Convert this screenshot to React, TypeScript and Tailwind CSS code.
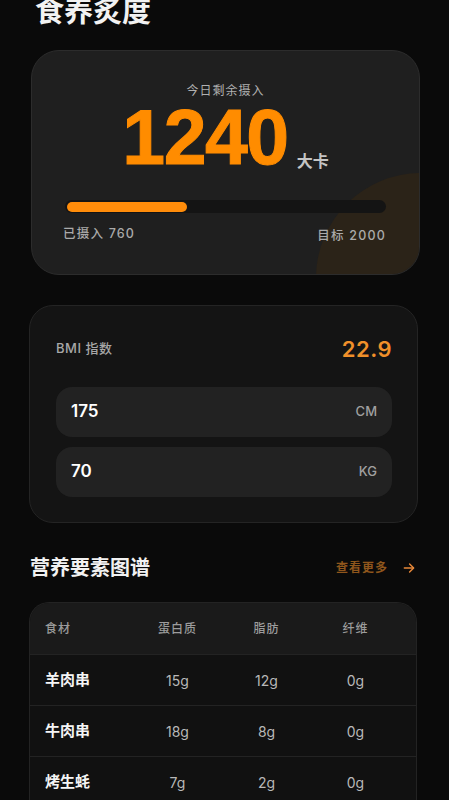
import React from "react";

const rows = [
  { name: "羊肉串", p: "15g", f: "12g", x: "0g" },
  { name: "牛肉串", p: "18g", f: "8g", x: "0g" },
  { name: "烤生蚝", p: "7g", f: "2g", x: "0g" },
];

const cjk = { fontFamily: '"Inter", "Noto Sans CJK SC", sans-serif' };

export default function App() {
  return (
    <div className="w-[449px] h-[800px] overflow-hidden bg-[#0a0a0a] text-white" style={cjk}>
      <div className="pl-[31px] pr-[29px]">
        <h1 className="mt-[-3px] pl-[4px] text-[29px] leading-[29px] font-bold text-[#f2f2f2]">食养炙度</h1>

        {/* Calorie card */}
        <div className="relative mt-[24px] h-[225px] overflow-hidden rounded-[28px] border border-[#2c2c2c] bg-[#1f1f1f]">
          <div className="absolute left-[284px] top-[122px] h-[210px] w-[210px] rounded-full bg-[#2b2318]" />
          <div className="relative flex flex-col px-[33px] pt-[32px]">
            <div className="text-center text-[12px] leading-[15px] tracking-[1px] text-[#b0b0b0]">今日剩余摄入</div>
            <div className="mt-[4px] flex items-end justify-center gap-[9px]">
              <span
                className="text-[77px] leading-[70px] font-bold tracking-[-1.5px] text-[#ff8c00] [-webkit-text-stroke:1px_#ff8c00]"
                style={{ fontFamily: '"Liberation Sans", Arial, sans-serif' }}
              >
                1240
              </span>
              <span className="mb-[1px] text-[16px] leading-[20px] font-bold text-[#c4c4c4]">大卡</span>
            </div>
            <div className="mt-[28px] h-[13px] w-full rounded-full bg-[#141414] p-[1.5px]">
              <div className="h-[10px] w-[38%] rounded-full bg-[#ff8c0a]" />
            </div>
            <div className="mt-[11px] flex items-center justify-between text-[12.5px] leading-[16px] tracking-[1.2px] text-[#aaaaaa] font-medium">
              <span className="-ml-[2px]">已摄入 760</span>
              <span className="mt-[4px]">目标 2000</span>
            </div>
          </div>
        </div>

        {/* BMI card */}
        <div className="mt-[30px] -ml-[2px] mr-[2px] rounded-[24px] border border-[#242424] bg-[#141414] pl-[26px] pr-[25px] pt-[29px] pb-[25px]">
          <div className="flex h-[28px] items-center justify-between">
            <span className="text-[13px] tracking-[0.5px] text-[#a8a8a8] font-medium">BMI 指数</span>
            <span className="text-[22px] font-semibold tracking-[0.5px] text-[#f0902a]">22.9</span>
          </div>
          <div className="mt-[24px] flex h-[50px] items-center justify-between rounded-[16px] bg-[#222222] px-[15px]">
            <span className="text-[17px] font-semibold text-white">175</span>
            <span className="text-[13px] font-medium text-[#a0a0a0]">CM</span>
          </div>
          <div className="mt-[10px] flex h-[50px] items-center justify-between rounded-[16px] bg-[#222222] px-[15px]">
            <span className="text-[17px] font-semibold text-white">70</span>
            <span className="text-[13px] font-medium text-[#a0a0a0]">KG</span>
          </div>
        </div>

        {/* Section header */}
        <div className="mt-[33px] -ml-[1px] flex h-[24px] items-center justify-between pr-[4px]">
          <span className="text-[20px] font-bold text-[#f2f2f2]">营养要素图谱</span>
          <div className="flex items-center gap-[14px]">
            <span className="text-[12px] font-bold tracking-[1px] text-[#8f561c]">查看更多</span>
            <svg width="14" height="14" viewBox="0 0 24 24" fill="none" stroke="#e8893a" strokeWidth="2.4" strokeLinecap="round" strokeLinejoin="round">
              <path d="M4 12h15" />
              <path d="M13 5l7 7-7 7" />
            </svg>
          </div>
        </div>

        {/* Table */}
        <div className="mt-[22px] -ml-[2px] mr-[3px] overflow-hidden rounded-t-[20px] border border-b-0 border-[#232323] bg-[#111111]">
          <div className="grid h-[51px] grid-cols-[88px_89px_89px_89px] items-center bg-[#1a1a1a] px-[15px] text-[12px] font-medium tracking-[1px] text-[#9c9c9c]">
            <span>食材</span>
            <span className="text-center">蛋白质</span>
            <span className="text-center">脂肪</span>
            <span className="text-center">纤维</span>
          </div>
          {rows.map((r) => (
            <div
              key={r.name}
              className="grid h-[51px] grid-cols-[88px_89px_89px_89px] items-center border-t border-[#232323] px-[15px]"
            >
              <span className="text-[15px] font-bold text-[#f5f5f5]">{r.name}</span>
              <span className="text-center text-[14px] text-[#b8b8b8]">{r.p}</span>
              <span className="text-center text-[14px] text-[#b8b8b8]">{r.f}</span>
              <span className="text-center text-[14px] text-[#b8b8b8]">{r.x}</span>
            </div>
          ))}
        </div>
      </div>
    </div>
  );
}
